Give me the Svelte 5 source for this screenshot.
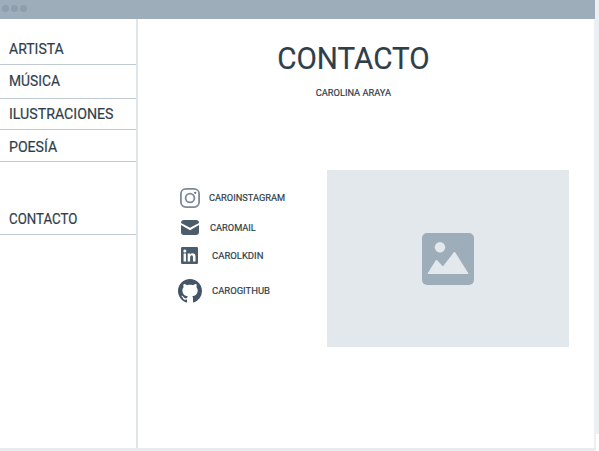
<script>
  const links = [
    { label: 'ARTISTA', height: 46, bottom: 6, scale: 0.935 },
    { label: 'MÚSICA', height: 34, bottom: 8, scale: 0.92 },
    { label: 'ILUSTRACIONES', height: 31, bottom: 6, scale: 0.945 },
    { label: 'POESÍA', height: 32, bottom: 5, scale: 0.94 },
    { label: 'CONTACTO', height: 73, bottom: 6, scale: 0.885 }
  ];
  const contacts = [
    { icon: 'instagram', label: 'CAROINSTAGRAM', height: 32, indent: 0, scale: 0.965 },
    { icon: 'mail', label: 'CAROMAIL', height: 28, indent: 1, scale: 0.965 },
    { icon: 'linkedin', label: 'CAROLKDIN', height: 28, indent: 2.5, scale: 0.99 },
    { icon: 'github', label: 'CAROGITHUB', height: 42, indent: 3, scale: 0.985 }
  ];
</script>

<div class="page">
  <div class="window">
    <header><i></i><i></i><i></i></header>
    <div class="body">
      <nav>
        {#each links as link}
          <div class="link" style="height: {link.height}px; padding-bottom: {link.bottom}px">
            <span style="transform: scaleX({link.scale})">{link.label}</span>
          </div>
        {/each}
      </nav>
      <main>
        <h1><span>CONTACTO</span></h1>
        <p><span>CAROLINA ARAYA</span></p>
        <section>
          <ul>
            {#each contacts as c}
              <li style="height: {c.height}px">
                <div class="icon">
                  {#if c.icon === 'instagram'}
                    <svg width="20" height="20" viewBox="0 0 20 20" fill="none" stroke="#7d8a97" stroke-width="1.8">
                      <rect x="0.9" y="0.9" width="18.2" height="18.2" rx="5" />
                      <circle cx="10" cy="10" r="4.4" />
                      <circle cx="15.2" cy="4.8" r="1.1" fill="#5b6b7a" stroke="none" />
                    </svg>
                  {:else if c.icon === 'mail'}
                    <svg width="18" height="15" viewBox="0 0 18 15" fill="#4b5c6b">
                      <path d="M3 0H15Q18 0 18 3L9 7.8L0 3Q0 0 3 0Z" />
                      <path d="M0 5L9 10.3L18 5V12Q18 15 15 15H3Q0 15 0 12Z" />
                    </svg>
                  {:else if c.icon === 'linkedin'}
                    <svg width="17" height="17" viewBox="0 0 17 17">
                      <rect width="17" height="17" rx="1.3" fill="#4b5c6b" />
                      <circle cx="3.8" cy="3.9" r="1.5" fill="#fff" />
                      <path fill="#fff" d="M2.6 6.4H5V14.4H2.6ZM6.7 6.4H9V7.5Q9.8 6.2 11.5 6.2Q14.5 6.2 14.5 9.6V14.4H12V10.3Q12 8.3 10.7 8.3Q9.1 8.3 9.1 10.4V14.4H6.7Z" />
                    </svg>
                  {:else}
                    <svg width="24" height="24" viewBox="0 0 16 16" fill="#445665">
                      <path d="M8 0C3.58 0 0 3.58 0 8c0 3.54 2.29 6.53 5.47 7.59.4.07.55-.17.55-.38 0-.19-.01-.82-.01-1.49-2.01.37-2.53-.49-2.69-.94-.09-.23-.48-.94-.82-1.13-.28-.15-.68-.52-.01-.53.63-.01 1.08.58 1.23.82.72 1.21 1.87.87 2.33.66.07-.52.28-.87.51-1.07-1.78-.2-3.64-.89-3.64-3.95 0-.87.31-1.59.82-2.15-.08-.2-.36-1.02.08-2.12 0 0 .67-.21 2.2.82.64-.18 1.32-.27 2-.27s1.36.09 2 .27c1.53-1.04 2.2-.82 2.2-.82.44 1.1.16 1.92.08 2.12.51.56.82 1.27.82 2.15 0 3.07-1.87 3.75-3.65 3.95.29.25.54.73.54 1.48 0 1.07-.01 1.93-.01 2.2 0 .21.15.46.55.38A8.01 8.01 0 0 0 16 8c0-4.42-3.58-8-8-8z" />
                    </svg>
                  {/if}
                </div>
                <span style="margin-left: {c.indent}px; transform: scaleX({c.scale})">{c.label}</span>
              </li>
            {/each}
          </ul>
          <div class="picture">
            <svg width="52" height="52" viewBox="0 0 52 52">
              <rect width="52" height="52" rx="5" fill="#9eadba" />
              <circle cx="18" cy="14.3" r="5.2" fill="#e2e8ec" />
              <path d="M6 40.5L14.5 27L21 34L32.5 19L46 40.5Z" fill="#e2e8ec" stroke="#e2e8ec" stroke-linejoin="round" />
            </svg>
          </div>
        </section>
      </main>
    </div>
  </div>
  <div class="edge"></div>
</div>

<style>
  .page {
    display: flex;
    width: 599px;
    height: 451px;
    overflow: hidden;
    background: #fff;
    color: #303e4a;
    font-family: Roboto, "Liberation Sans", sans-serif;
  }
  .window {
    box-sizing: border-box;
    display: flex;
    flex-direction: column;
    width: 596px;
    height: 451px;
    border-right: 2px solid #edf0f2;
    border-bottom: 3px solid #e8ecef;
  }
  .edge {
    width: 3px;
    height: 434px;
    background: #eceff1;
  }
  header {
    display: flex;
    gap: 2px;
    align-items: center;
    box-sizing: border-box;
    width: 595px;
    height: 18.5px;
    flex: none;
    padding: 0 0 2px 1.5px;
    background: #9eadba;
  }
  header i {
    width: 7px;
    height: 7px;
    border-radius: 50%;
    background: #8e9eac;
  }
  .body {
    display: flex;
    flex: 1;
  }
  nav {
    width: 136px;
    border-right: 2px solid #e0e5e9;
  }
  .link {
    box-sizing: border-box;
    display: flex;
    align-items: flex-end;
    padding-left: 9px;
    border-bottom: 1px solid #c0cad2;
    font-size: 15px;
    line-height: 18px;
    -webkit-text-stroke: 0.2px;
  }
  span {
    display: block;
    white-space: nowrap;
    transform-origin: left;
  }
  main {
    flex: 1;
  }
  h1, p {
    display: flex;
    justify-content: center;
    margin: 0;
  }
  h1 {
    padding: 19px 25.5px 1px 0;
    font-size: 32px;
    font-weight: 400;
    line-height: 40px;
    -webkit-text-stroke: 0.2px;
  }
  h1 span {
    transform: scaleX(0.925);
    transform-origin: center;
  }
  p {
    padding: 8px 25px 0 0;
    font-size: 9.7px;
    line-height: 12px;
  }
  p span {
    transform: scaleX(0.955);
    transform-origin: center;
    -webkit-text-stroke: 0.2px;
  }
  section {
    display: flex;
    padding-top: 71.9px;
  }
  ul {
    width: 188.5px;
    box-sizing: border-box;
    margin: 0;
    padding: 11.5px 0 0 38px;
    list-style: none;
  }
  li {
    display: flex;
    align-items: center;
    font-size: 9.6px;
  }
  li span {
    -webkit-text-stroke: 0.2px;
  }
  .icon {
    display: flex;
    justify-content: center;
    width: 27px;
    flex: none;
    margin-right: 6px;
  }
  .picture {
    display: flex;
    align-items: center;
    justify-content: center;
    width: 242.5px;
    height: 177px;
    background: #e2e8ec;
  }
  svg {
    display: block;
  }
</style>
